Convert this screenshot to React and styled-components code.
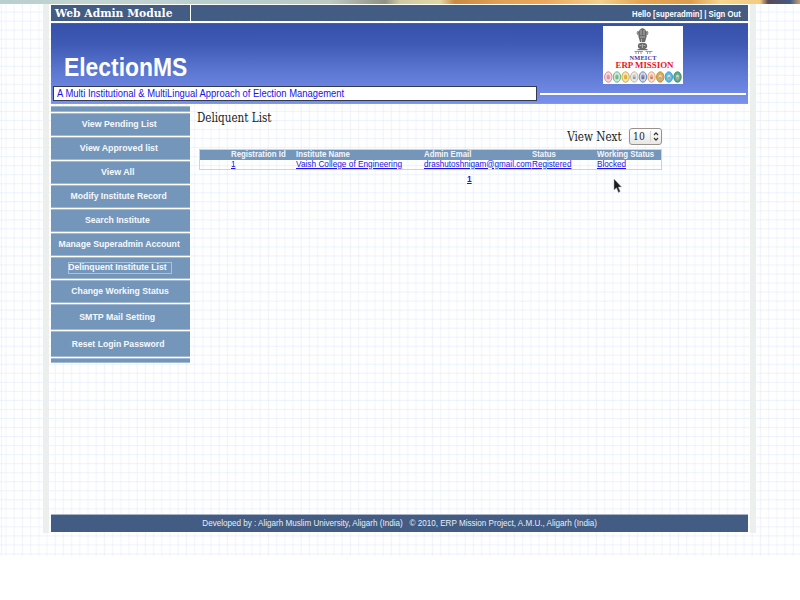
import React from 'react';
import styled, { createGlobalStyle } from 'styled-components';

const Global = createGlobalStyle`
  html, body { margin: 0; padding: 0; background: #fff; }
  body { width: 800px; height: 600px; overflow: hidden; font-family: "Liberation Sans", Arial, sans-serif; }
  *, *::before, *::after { box-sizing: border-box; }
`;

const Page = styled.div`
  position: relative;
  width: 800px;
  height: 556px;
  background-color: #fff;
  background-image:
    repeating-linear-gradient(90deg, transparent 0, rgba(226, 234, 247, 0.5) 1.1px, transparent 2.2px 8.2px),
    repeating-linear-gradient(180deg, transparent 0, rgba(218, 233, 249, 0.5) 1.1px, transparent 2.2px 9.03px);
  background-position: 4.9px 0, 0 2px;
`;

const Banner = styled.div`
  height: 4px;
  background: linear-gradient(90deg, #b9cfcd 0, #c3d5d3 90px, #b5cdcd 250px, #bccac4 330px, #8f9183 385px, #cfc9a4 400px, #e2d7a4 440px, #c98a42 455px, #e0a055 500px, #eba85c 545px, #f3cf8d 600px, #e5a552 640px, #dd9c4e 690px, #f7d68d 720px, #f4cb82 760px, #5b4a56 768px, #425a86 790px, #c9a070 800px);
`;

const Shell = styled.div`
  width: 713px;
  height: 529px;
  margin-left: 43px;
  border: solid #ebefee;
  border-width: 0 6px;
  padding: 1px 2px 0;
  display: flex;
  flex-direction: column;
`;

const TopBar = styled.div`
  height: 16px;
  width: 697px;
  flex: none;
  background: #435c84;
  display: flex;
  align-items: center;
  justify-content: space-between;
  box-shadow: 0 0 0 1px #fff;
`;

const ModuleCell = styled.div`
  width: 140px;
  height: 16px;
  padding-left: 4px;
  border-right: 1px solid #fff;
  display: flex;
  align-items: center;
`;

const Txt = styled.span`
  display: inline-block;
  white-space: nowrap;
  line-height: 1;
  font-size: ${(p) => p.$size}px;
  font-weight: ${(p) => (p.$bold ? 700 : 400)};
  font-family: ${(p) => (p.$serif ? '"DejaVu Serif", serif' : '"Liberation Sans", Arial, sans-serif')};
  color: ${(p) => p.$color || '#fff'};
  transform: translate(${(p) => p.$dx || 0}px, ${(p) => p.$dy || 0}px) scaleX(${(p) => p.$sx || 1});
  transform-origin: ${(p) => p.$from || 'left'} center;
`;

const Header = styled.div`
  width: 697px;
  height: 81px;
  flex: none;
  margin-top: 2px;
  background: linear-gradient(180deg, #3551aa 0, #3e5ab4 25%, #5c77d2 60%, #7891ec 100%);
  border-bottom: 1px solid #8497e8;
  border-top: 1px solid #4560a8;
  display: grid;
  grid-template-columns: 486px 211px;
  grid-template-rows: 62px 17px;
`;

const Brand = styled.div`
  padding: 31px 0 0 12.5px;
`;

const LogoCell = styled.div`
  padding: 1.5px 0 0 65.5px;
  svg { display: block; }
`;

const Tagline = styled.div`
  height: 15px;
  width: 484px;
  margin-left: 2px;
  padding-left: 3px;
  background: #fff;
  border: 1px solid #33394f;
  display: flex;
  align-items: center;
`;

const Rule = styled.div`
  margin: 7px 2px 0 3px;
  height: 1.5px;
  background: #fff;
`;

const Main = styled.div`
  display: flex;
  height: 409px;
  flex: none;
  padding-top: 2px;
`;

const Menu = styled.nav`
  width: 138.5px;
  height: 257px;
  background: #fff;
  display: flex;
  flex-direction: column;
  gap: 1px;
`;

const MenuItem = styled.div`
  height: ${(p) => p.$h}px;
  flex: none;
  background: #7596bb;
  border: solid #a3b9d1;
  border-width: 0.6px 0;
  display: flex;
  align-items: center;
  justify-content: center;
`;

const FocusBox = styled.div`
  width: 104px;
  height: 12px;
  border: 1px solid #abc2dc;
  display: flex;
  align-items: center;
  justify-content: center;
`;

const Content = styled.section`
  flex: 1;
  padding: 6px 0 0 7.5px;
`;

const Title = styled.div`
  height: 16px;
  display: flex;
`;

const Pager = styled.div`
  width: 465px;
  height: 17px;
  display: flex;
  justify-content: flex-end;
  align-items: center;
`;

const Select = styled.div`
  width: 33px;
  height: 17px;
  margin-left: 7px;
  border: 1px solid #96928e;
  border-radius: 3px;
  background: linear-gradient(#fff, #e9e7e5);
  display: flex;
  align-items: center;
  padding-left: 3px;
  svg { margin-left: auto; }
`;

const Table = styled.div`
  width: 463px;
  margin: 3.5px 0 0 2px;
  border: 1px solid #d6d3c4;
`;

const Row = styled.div`
  display: grid;
  grid-template-columns: 31px 65px 128px 107.5px 65px 1fr;
  height: ${(p) => (p.$head ? 10 : 9)}px;
  background: ${(p) => (p.$head ? '#7596bb' : 'transparent')};
  align-items: center;
`;

const Cell = styled.div`
  display: flex;
  min-width: 0;
`;

const Link = styled(Txt).attrs({ as: 'a' })`
  text-decoration: underline;
  text-decoration-thickness: 1px;
  text-underline-offset: 1px;
`;

const Pages = styled.div`
  display: flex;
  padding: 5px 0 0 270px;
  height: 16px;
`;

const Footer = styled.footer`
  width: 697px;
  height: 18px;
  flex: none;
  margin-top: 0.5px;
  background: #435c84;
  border-top: 1px solid #a9b4c8;
  display: flex;
  align-items: center;
  justify-content: center;
`;

const Pointer = styled.svg`
  position: absolute;
  left: 613px;
  top: 178px;
`;

const seals = ['#d9838d', '#5fae7b', '#d9a521', '#b8b4b0', '#6478a8', '#e39a6c', '#c58b2c', '#2d9fd8', '#2f8d68'];

function Logo() {
  return (
    <svg width="80" height="58" viewBox="0 0 80 58">
      <rect width="80" height="58" fill="#fff" />
      <g fill="#6c6c6c">
        <path d="M37 3.500 Q39.500 1 42 3.500 L44 6 L43.500 11 L42 16 H37 L35.500 11 L35 6Z" />
        <path d="M35 5 Q33 7 35 9 M44 5 Q46 7 44 9" stroke="#777" fill="none" />
        <ellipse cx="39.500" cy="20" rx="4.700" ry="3.300" />
        <path d="M34.500 23 H44.500 V24.200 H34.500Z" />
      </g>
      <path d="M38 4 V9 M41 4 V9 M37 11 H42 M38.500 13 V16 M36.500 19.500 H38.500 M40.500 19.500 H42.500 M39.500 18 V22" stroke="#ccc" strokeWidth=".7" />
      <path d="M31.500 25.500 H40 M42.500 25.500 H49.500 M33 25.500 V28 M35.500 26 V28 M38 25.500 V28 M44.500 26 V28 M47 25.500 V28" stroke="#666" strokeWidth=".9" opacity=".75" />
      <text x="26.500" y="34" textLength="27" lengthAdjust="spacing" fontFamily="Liberation Serif" fontWeight="700" fontSize="6.300" fill="#3a36a8">NMEICT</text>
      <text x="12.500" y="42.200" textLength="58" lengthAdjust="spacingAndGlyphs" fontFamily="Liberation Serif" fontWeight="700" fontSize="8.900" fill="#ee1520">ERP MISSION</text>
      {seals.map((c, i) => (
        <g key={c} transform={`translate(${5.3 + i * 8.65} 51)`}>
          <ellipse rx="3.700" ry="5.200" fill={c} fillOpacity={i > 5 ? 0.75 : 0.3} stroke={c} strokeWidth=".9" />
          <ellipse rx="1.700" ry="2.600" fill={i > 5 ? '#f3e6c0' : c} fillOpacity=".75" />
          <path d="M-1.200 1 H1.200" stroke={i > 2 ? '#445' : c} strokeWidth=".9" opacity=".7" />
        </g>
      ))}
    </svg>
  );
}

const items = [
  { text: 'View Pending List', h: 23, dx: -1.5, sx: 0.945 },
  { text: 'View Approved list', h: 23, dx: -1.5, sx: 0.945 },
  { text: 'View All', h: 23, dx: -2.8, sx: 0.955 },
  { text: 'Modify Institute Record', h: 23, dx: -2 },
  { text: 'Search Institute', h: 22.8, dx: -2.5 },
  { text: 'Manage Superadmin Account', h: 22.8, dx: -1 },
  { text: 'Delinquent Institute List', h: 22.8, dx: -2.5, focus: true },
  { text: 'Change Working Status', h: 23, dx: -0.3 },
  { text: 'SMTP Mail Setting', h: 26, dx: -3, sx: 0.945 },
  { text: 'Reset Login Password', h: 25.5, dx: -1.8, dy: 0.6 },
];

const Label = ({ text, dx, dy, sx = 0.93 }) => (
  <Txt $size={9.3} $bold $sx={sx} $dx={dx} $dy={dy} $from="center" $color="#f6f9fc">{text}</Txt>
);

const heads = ['Registration Id', 'Institute Name', 'Admin Email', 'Status', 'Working Status'];
const record = ['1', 'Vaish College of Engineering', 'drashutoshnigam@gmail.com', 'Registered', 'Blocked'];
const stretch = [0.93, 0.953, 0.935, 0.938, 0.94];

export default function App() {
  return (
    <Page>
      <Global />
      <Banner />
      <Shell>
        <TopBar>
          <ModuleCell><Txt $serif $bold $size={11.7} $sx={0.92} $dy={0.8}>Web Admin Module</Txt></ModuleCell>
          <Txt $bold $size={9.4} $sx={0.825} $dx={-7} $dy={1.4} $from="right">Hello [superadmin] | Sign Out</Txt>
        </TopBar>
        <Header>
          <Brand><Txt $bold $size={25} $sx={0.915}>ElectionMS</Txt></Brand>
          <LogoCell><Logo /></LogoCell>
          <Tagline><Txt $size={10.6} $sx={0.89} $color="#1a10f0">A Multi Institutional &amp; MultiLingual Approach of Election Management</Txt></Tagline>
          <Rule />
        </Header>
        <Main>
          <Menu>
            <MenuItem $h={6} />
            {items.map((it) => (
              <MenuItem key={it.text} $h={it.h}>
                {it.focus ? <FocusBox><Label {...it} /></FocusBox> : <Label {...it} />}
              </MenuItem>
            ))}
            <MenuItem $h={5.5} />
          </Menu>
          <Content>
            <Title><Txt $serif $size={12} $sx={0.865} $color="#222">Deliquent List</Txt></Title>
            <Pager>
              <Txt $serif $size={12} $sx={0.87} $dy={-0.5} $from="right" $color="#222">View Next</Txt>
              <Select>
                <Txt $serif $size={10.5} $sx={0.88} $color="#222">10</Txt>
                <svg width="11" height="13" viewBox="0 0 11 13">
                  <path d="M.5 1 V12" stroke="#d5d2cf" />
                  <path d="M4 5 L6 2.800 L8 5 M4 8 L6 10.200 L8 8" fill="none" stroke="#333" strokeWidth="1.200" />
                </svg>
              </Select>
            </Pager>
            <Table>
              <Row $head>
                <Cell />
                {heads.map((t) => <Cell key={t}><Txt $bold $size={8.7} $sx={0.9} $color="#f4f7fb">{t}</Txt></Cell>)}
              </Row>
              <Row>
                <Cell />
                {record.map((t, i) => <Cell key={t}><Link $size={8.7} $sx={stretch[i]} $color="#1c14ea">{t}</Link></Cell>)}
              </Row>
            </Table>
            <Pages><Link $bold $size={9.3} $sx={0.9} $color="#1c14ea">1</Link></Pages>
          </Content>
        </Main>
        <Footer>
          <Txt $size={9.4} $sx={0.863} $from="center" $color="#e8edf4">Developed by : Aligarh Muslim University, Aligarh (India) &nbsp; © 2010, ERP Mission Project, A.M.U., Aligarh (India)</Txt>
        </Footer>
      </Shell>
      <Pointer width="9" height="16" viewBox="0 0 9 16">
        <path d="M1 1 V12 L3.500 9.800 L5.500 14.500 L7.200 13.600 L5.300 9 H8.500Z" fill="#1c1c1c" stroke="#aaa" strokeWidth=".5" />
      </Pointer>
    </Page>
  );
}
